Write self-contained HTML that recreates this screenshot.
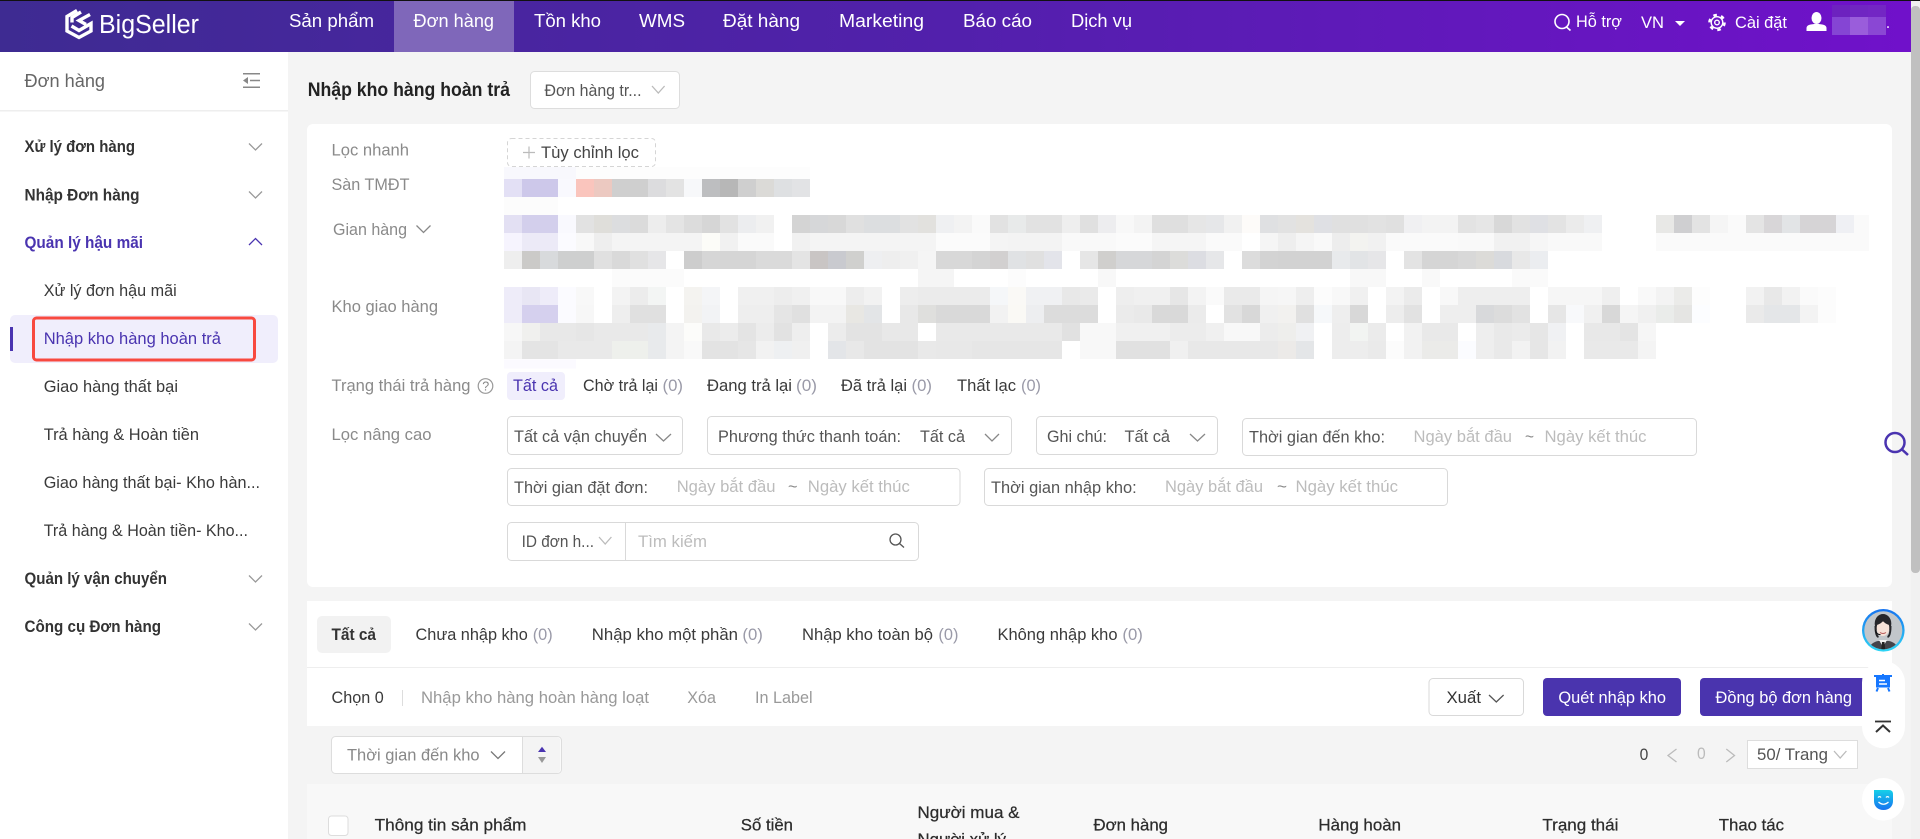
<!DOCTYPE html>
<html lang="vi">
<head>
<meta charset="utf-8">
<title>BigSeller - Nhập kho hàng hoàn trả</title>
<style>
html,body{margin:0;padding:0;width:1920px;height:839px;overflow:hidden;background:#f4f4f4}
svg{display:block;position:absolute;left:0;top:0}
text{font-family:"Liberation Sans",Arial,sans-serif;white-space:pre}
.n text{font-size:18.8px;fill:#fff}
.t text{font-size:17px;fill:#fff}
.g text{font-size:17px;fill:#8a8a8a}
.b text{font-size:17px;fill:#3a3a3a}
.h text{font-size:17px;fill:#333;font-weight:bold}
.p text{font-size:17px;fill:#bcbcbc}
.c text{font-size:17px;fill:#9a9aa8}
.d text{font-size:17px;fill:#555}
.m path{stroke-width:18;fill:none}
.th text{font-size:17px;fill:#2c2c2c;stroke:#2c2c2c;stroke-width:.25}
.ch{fill:none;stroke:#777;stroke-width:1.3}
.cl{fill:none;stroke:#bbb;stroke-width:1.3}
</style>
</head>
<body>
<svg width="1920" height="839" viewBox="0 0 1920 839" xmlns="http://www.w3.org/2000/svg">
<defs>
<linearGradient id="tb" x1="0" y1="0" x2="1" y2="0"><stop offset="0" stop-color="#3e2b92"/><stop offset=".5" stop-color="#5220ac"/><stop offset="1" stop-color="#7011ca"/></linearGradient>
<linearGradient id="ring" x1="0" y1="0" x2="0" y2="1"><stop offset="0" stop-color="#1673f0"/><stop offset="1" stop-color="#2fd6f5"/></linearGradient>
<linearGradient id="mask" x1="0" y1="0" x2="0" y2="1"><stop offset="0" stop-color="#16d0e8"/><stop offset="1" stop-color="#1672f0"/></linearGradient>
<clipPath id="av"><circle cx="1883.3" cy="630.3" r="19"/></clipPath>
</defs>

<!-- page background -->
<rect width="1920" height="839" fill="#f4f4f4"/>

<!-- topbar -->
<rect x="0" y="0" width="1911" height="52" fill="url(#tb)"/>
<rect x="0" y="0" width="1920" height="1" fill="#111"/>
<rect x="394" y="1" width="120" height="51" fill="#7f67ba"/>
<!-- logo -->
<g fill="none" stroke="#fff" stroke-width="3.4" stroke-linejoin="miter">
<path d="M77 10.500L67 16.500V31L79 37.500L91 31V23.500L79 30.500L71.500 26"/>
<path d="M90 14.500L79 20.500L86 24.500"/>
<path d="M72 22.500V17.500L81 12"/>
</g>
<text x="99" y="33" font-size="25.5" fill="#fff" textLength="100" lengthAdjust="spacingAndGlyphs">BigSeller</text>
<g class="n">
<text x="289" y="27" textLength="85" lengthAdjust="spacingAndGlyphs">Sản phẩm</text>
<text x="413.500" y="27" textLength="80.500" lengthAdjust="spacingAndGlyphs">Đơn hàng</text>
<text x="534" y="27" textLength="67" lengthAdjust="spacingAndGlyphs">Tồn kho</text>
<text x="639" y="27" textLength="46" lengthAdjust="spacingAndGlyphs">WMS</text>
<text x="723" y="27" textLength="77" lengthAdjust="spacingAndGlyphs">Đặt hàng</text>
<text x="839" y="27" textLength="85" lengthAdjust="spacingAndGlyphs">Marketing</text>
<text x="963" y="27" textLength="69" lengthAdjust="spacingAndGlyphs">Báo cáo</text>
<text x="1071" y="27" textLength="61" lengthAdjust="spacingAndGlyphs">Dịch vụ</text>
</g>
<!-- topbar right -->
<g fill="none" stroke="#fff" stroke-width="1.600">
<circle cx="1562" cy="21.500" r="7"/>
<path d="M1566.500 27L1570.500 30.500"/>
<circle cx="1717" cy="22.500" r="5.800" stroke-width="1.400"/>
<circle cx="1717" cy="22.500" r="7.600" stroke-width="2.400" stroke-dasharray="3.6 4.36"/>
<circle cx="1717" cy="22.500" r="2.300" stroke-width="1.400"/>
</g>
<g class="t">
<text x="1576" y="27" textLength="46" lengthAdjust="spacingAndGlyphs">Hỗ trợ</text>
<text x="1641" y="28" textLength="23" lengthAdjust="spacingAndGlyphs">VN</text>
<text x="1735" y="28" textLength="52" lengthAdjust="spacingAndGlyphs">Cài đặt</text>
<text x="1886" y="28" textLength="4" lengthAdjust="spacingAndGlyphs">.</text>
</g>
<path d="M1675 21h10l-5 5z" fill="#fff"/>
<ellipse cx="1816.500" cy="18" rx="5" ry="6" fill="#fff"/>
<path d="M1806.500 31v-3c0-3 4-4 10-4s10 1 10 4v3z" fill="#fff"/>
<rect x="1832" y="5" width="18" height="12" fill="#6d22bf"/><rect x="1850" y="5" width="18" height="12" fill="#7026c2"/><rect x="1868" y="5" width="18" height="12" fill="#7326c4"/>
<rect x="1832" y="17" width="18" height="18" fill="#8545d4"/><rect x="1850" y="17" width="18" height="18" fill="#9a5ddb"/><rect x="1868" y="17" width="18" height="18" fill="#8a47d4"/>

<!-- sidebar -->
<rect x="0" y="52" width="288" height="787" fill="#fff"/>
<rect x="0" y="110" width="288" height="1.500" fill="#eee"/>
<text x="24.500" y="87" font-size="18.5" fill="#666" textLength="80.500" lengthAdjust="spacingAndGlyphs">Đơn hàng</text>
<g stroke="#888" stroke-width="1.500" fill="none"><path d="M243 73.800h17M243 87.300h17M250 80.500h10"/></g>
<path d="M248 77v7l-5-3.500z" fill="#888"/>
<rect x="10" y="315" width="268" height="48" rx="5" fill="#f0eefc"/>
<rect x="10" y="327" width="3" height="24" fill="#4a34b0"/>
<rect x="33.500" y="318" width="221" height="42" rx="3" fill="none" stroke="#f8493f" stroke-width="3"/>
<g class="h">
<text x="24.500" y="152" textLength="110.500" lengthAdjust="spacingAndGlyphs">Xử lý đơn hàng</text>
<text x="24.500" y="200.500" textLength="115" lengthAdjust="spacingAndGlyphs">Nhập Đơn hàng</text>
<text x="24.500" y="248" textLength="118.500" lengthAdjust="spacingAndGlyphs" style="fill:#4a34b0">Quản lý hậu mãi</text>
<text x="24.500" y="584" textLength="142.500" lengthAdjust="spacingAndGlyphs">Quản lý vận chuyển</text>
<text x="24.500" y="632" textLength="136.500" lengthAdjust="spacingAndGlyphs">Công cụ Đơn hàng</text>
</g>
<g class="ch" style="stroke:#999">
<path d="M249 143.500l6.500 6.500l6.500-6.500"/><path d="M249 191.500l6.500 6.500l6.500-6.500"/>
<path d="M249 575.500l6.500 6.500l6.500-6.500"/><path d="M249 623.500l6.500 6.500l6.500-6.500"/>
</g>
<path class="ch" style="stroke:#4a34b0" d="M249 245l6.500-6.500l6.500 6.500"/>
<g class="b">
<text x="43.700" y="296" textLength="133" lengthAdjust="spacingAndGlyphs">Xử lý đơn hậu mãi</text>
<text x="43.700" y="344" textLength="177.300" lengthAdjust="spacingAndGlyphs" style="fill:#4a34b0">Nhập kho hàng hoàn trả</text>
<text x="43.700" y="392" textLength="134.300" lengthAdjust="spacingAndGlyphs">Giao hàng thất bại</text>
<text x="43.700" y="440" textLength="155.300" lengthAdjust="spacingAndGlyphs">Trả hàng &amp; Hoàn tiền</text>
<text x="43.700" y="488" textLength="216.300" lengthAdjust="spacingAndGlyphs">Giao hàng thất bại- Kho hàn...</text>
<text x="43.700" y="536" textLength="204.300" lengthAdjust="spacingAndGlyphs">Trả hàng &amp; Hoàn tiền- Kho...</text>
</g>

<!-- page title -->
<text x="307.700" y="96" font-size="19" font-weight="bold" fill="#222" textLength="202.300" lengthAdjust="spacingAndGlyphs">Nhập kho hàng hoàn trả</text>
<rect x="530.500" y="71.500" width="149" height="37" rx="4" fill="#fff" stroke="#ddd"/>
<text x="544.500" y="96" font-size="16.500" fill="#555" textLength="97" lengthAdjust="spacingAndGlyphs">Đơn hàng tr...</text>
<path class="cl" d="M652 86l6.300 7l6.300-7"/>

<!-- cards -->
<rect x="307" y="124" width="1585" height="463" rx="6" fill="#fff"/>
<rect x="307" y="601" width="1585" height="125" fill="#fff"/>
<rect x="307" y="667" width="1585" height="1" fill="#eee"/>
<rect x="307" y="784" width="1585" height="55" fill="#f8f8f8"/>

<!-- mosaic -->
<g class="m">
<g transform="translate(0,173)" style="stroke-width:12"><path stroke="#f8f8fd" d="M504 0h72" style="stroke-width:12"/><path stroke="#fdfdfd" d="M576 0h234" style="stroke-width:12"/></g>
<g transform="translate(0,188)">
<path stroke="#e3e0f5" d="M504 0h18"/><path stroke="#cdc8ea" d="M522 0h36"/><path stroke="#f9f9fe" d="M558 0h18"/><path stroke="#fac5bd" d="M576 0h18"/><path stroke="#ecc9c1" d="M594 0h18"/><path stroke="#cfcfcf" d="M612 0h36"/><path stroke="#dcdcde" d="M648 0h18"/><path stroke="#e3e3e3" d="M666 0h18"/><path stroke="#f7f8fa" d="M684 0h18"/><path stroke="#bdbec0" d="M702 0h18"/><path stroke="#b7b7b7" d="M720 0h18"/><path stroke="#cfcfcf" d="M738 0h18"/><path stroke="#dbdad7" d="M756 0h18"/><path stroke="#dee0e2" d="M774 0h18"/><path stroke="#e2e3e5" d="M792 0h18"/>
</g>
<g transform="translate(0,206)"><path stroke="#fcfcfc" d="M504 0h54"/></g>
<g transform="translate(0,224)">
<path stroke="#e3e0f3" d="M504 0h18"/><path stroke="#d3cfec" d="M522 0h36"/><path stroke="#f9f9fe" d="M558 0h18"/><path stroke="#e2e2e2" d="M576 0h18"/><path stroke="#dfdeda" d="M594 0h18"/><path stroke="#dcdddf" d="M612 0h18"/><path stroke="#dbdbdb" d="M630 0h18"/><path stroke="#ededed" d="M648 0h18"/><path stroke="#e4e4e4" d="M666 0h18"/><path stroke="#dcdcdc" d="M684 0h18"/><path stroke="#d6d6d6" d="M702 0h18"/><path stroke="#e2e2e2" d="M720 0h18"/><path stroke="#ecedef" d="M738 0h18"/><path stroke="#f1f1f1" d="M756 0h18"/><path stroke="#d4d4d4" d="M792 0h18"/><path stroke="#d6d7d9" d="M810 0h18"/><path stroke="#d8d8d8" d="M828 0h18"/><path stroke="#e0e0e0" d="M846 0h18"/><path stroke="#dcdee0" d="M864 0h36"/><path stroke="#e2e2e2" d="M900 0h18"/><path stroke="#e2e1de" d="M918 0h18"/><path stroke="#eff0f2" d="M936 0h18"/><path stroke="#f3f3f3" d="M954 0h18"/><path stroke="#fafafa" d="M972 0h18"/><path stroke="#e2e2e2" d="M990 0h18"/><path stroke="#e8eaea" d="M1008 0h18"/><path stroke="#e2e2e2" d="M1026 0h36"/><path stroke="#eeeeee" d="M1062 0h18"/><path stroke="#e0e0e0" d="M1080 0h18"/><path stroke="#ededef" d="M1098 0h18"/><path stroke="#f8f8f8" d="M1116 0h18"/><path stroke="#f3f3f3" d="M1134 0h18"/><path stroke="#dfdfdf" d="M1152 0h36"/><path stroke="#e6e6e6" d="M1188 0h18"/><path stroke="#e6e7e9" d="M1206 0h18"/><path stroke="#f1f1f1" d="M1224 0h18"/><path stroke="#fdfbf9" d="M1242 0h18"/><path stroke="#dfe0e2" d="M1260 0h18"/><path stroke="#e2e2e2" d="M1278 0h18"/><path stroke="#e4e2de" d="M1296 0h18"/><path stroke="#dfe0e4" d="M1314 0h18"/><path stroke="#e0e0e0" d="M1332 0h36"/><path stroke="#e2e2e2" d="M1368 0h18"/><path stroke="#e0e0e0" d="M1386 0h18"/><path stroke="#f0f0f2" d="M1404 0h18"/><path stroke="#f3f3f3" d="M1422 0h36"/><path stroke="#e3e3e3" d="M1458 0h18"/><path stroke="#e6e6e6" d="M1476 0h18"/><path stroke="#d8d8d8" d="M1494 0h18"/><path stroke="#e2e2e2" d="M1512 0h18"/><path stroke="#dfe0e4" d="M1530 0h18"/><path stroke="#e3e3e3" d="M1548 0h18"/><path stroke="#ebebeb" d="M1566 0h18"/><path stroke="#eff0f2" d="M1584 0h18"/><path stroke="#e8e8e6" d="M1656 0h18"/><path stroke="#cfcfd1" d="M1674 0h18"/><path stroke="#e3e3e3" d="M1692 0h18"/><path stroke="#f5f5f5" d="M1710 0h18"/><path stroke="#fafafa" d="M1728 0h18"/><path stroke="#e4e4e4" d="M1746 0h18"/><path stroke="#d8d6d8" d="M1764 0h18"/><path stroke="#e2e4e6" d="M1782 0h18"/><path stroke="#d6d4d6" d="M1800 0h36"/><path stroke="#eff0f4" d="M1836 0h18"/><path stroke="#fafafa" d="M1854 0h15"/>
</g>
<g transform="translate(0,242)">
<path stroke="#f6f4fe" d="M504 0h18"/><path stroke="#eceaf7" d="M522 0h36"/><path stroke="#fbfbff" d="M558 0h18"/><path stroke="#f8f8f8" d="M576 0h18"/><path stroke="#eeeeee" d="M594 0h18"/><path stroke="#f4f4f4" d="M612 0h90"/><path stroke="#fcfcf8" d="M702 0h18"/><path stroke="#f1f1f1" d="M720 0h18"/><path stroke="#fafafa" d="M738 0h36"/><path stroke="#f1f1f1" d="M792 0h18"/><path stroke="#f4f4f4" d="M810 0h126"/><path stroke="#fbfbfb" d="M936 0h54"/><path stroke="#f4f4f4" d="M990 0h18"/><path stroke="#f3f3f3" d="M1008 0h54"/><path stroke="#f9f9f9" d="M1062 0h54"/><path stroke="#fbfbfb" d="M1116 0h36"/><path stroke="#f5f5f5" d="M1152 0h54"/><path stroke="#fafafa" d="M1206 0h36"/><path stroke="#f5f5f5" d="M1260 0h18"/><path stroke="#eeeeee" d="M1278 0h18"/><path stroke="#f5f5f5" d="M1296 0h18"/><path stroke="#f9f9f9" d="M1314 0h18"/><path stroke="#ededed" d="M1332 0h18"/><path stroke="#f3f3f0" d="M1350 0h18"/><path stroke="#f1f1f1" d="M1368 0h18"/><path stroke="#fafafa" d="M1386 0h72"/><path stroke="#f9f9f9" d="M1458 0h36"/><path stroke="#f1f1f1" d="M1494 0h36"/><path stroke="#f6f6f6" d="M1530 0h18"/><path stroke="#f9f9f9" d="M1548 0h54"/><path stroke="#fafafa" d="M1656 0h213"/>
</g>
<g transform="translate(0,260)">
<path stroke="#eeeeee" d="M504 0h18"/><path stroke="#cbcac8" d="M522 0h18"/><path stroke="#d8dadc" d="M540 0h18"/><path stroke="#cecfcf" d="M558 0h36"/><path stroke="#e0e0e0" d="M594 0h18"/><path stroke="#d9d9d9" d="M612 0h18"/><path stroke="#e0e0e0" d="M630 0h18"/><path stroke="#e6e6e8" d="M648 0h18"/><path stroke="#cdcdcd" d="M684 0h18"/><path stroke="#d6d6d6" d="M702 0h18"/><path stroke="#d5d5d5" d="M720 0h36"/><path stroke="#dadada" d="M756 0h36"/><path stroke="#e4e4e4" d="M792 0h18"/><path stroke="#c9c5c4" d="M810 0h18"/><path stroke="#c9cacf" d="M828 0h18"/><path stroke="#d0d0ce" d="M846 0h18"/><path stroke="#eeeff1" d="M864 0h18"/><path stroke="#eeeeee" d="M882 0h18"/><path stroke="#f0f0f0" d="M900 0h18"/><path stroke="#f5f5f5" d="M918 0h18"/><path stroke="#d8d8d8" d="M936 0h36"/><path stroke="#d4d4d4" d="M972 0h18"/><path stroke="#d2d0d0" d="M990 0h18"/><path stroke="#e0e2e4" d="M1008 0h18"/><path stroke="#e0e0e0" d="M1026 0h18"/><path stroke="#e3e4ea" d="M1044 0h18"/><path stroke="#e6e6e6" d="M1080 0h18"/><path stroke="#d0cfcd" d="M1098 0h18"/><path stroke="#d6d7d9" d="M1116 0h36"/><path stroke="#d4d4d4" d="M1152 0h18"/><path stroke="#dcdcda" d="M1170 0h18"/><path stroke="#dcdde2" d="M1188 0h18"/><path stroke="#e6e7e9" d="M1206 0h18"/><path stroke="#dcdcdc" d="M1242 0h18"/><path stroke="#d3d3d3" d="M1260 0h18"/><path stroke="#d2d2d2" d="M1278 0h54"/><path stroke="#e8eaec" d="M1332 0h18"/><path stroke="#e2e4e6" d="M1350 0h18"/><path stroke="#e6e6e8" d="M1368 0h18"/><path stroke="#e3e3e3" d="M1404 0h18"/><path stroke="#d5d5d5" d="M1422 0h36"/><path stroke="#d8d8d8" d="M1458 0h18"/><path stroke="#dcdbd8" d="M1476 0h18"/><path stroke="#d8dade" d="M1494 0h18"/><path stroke="#e8e8e8" d="M1512 0h18"/><path stroke="#ebedf0" d="M1530 0h18"/>
</g>
<g transform="translate(0,278)">
<path stroke="#fbfbfb" d="M612 0h72"/><path stroke="#f5f5f5" d="M918 0h36"/><path stroke="#fcfcfc" d="M1008 0h18"/><path stroke="#f8f8f8" d="M1098 0h18"/><path stroke="#f8f8f8" d="M1350 0h36"/><path stroke="#f9f9f9" d="M1422 0h18"/><path stroke="#fafafa" d="M1512 0h36"/>
</g>
<g transform="translate(0,296)">
<path stroke="#eeecf9" d="M504 0h18"/><path stroke="#e8e6f4" d="M522 0h18"/><path stroke="#eeecf9" d="M540 0h18"/><path stroke="#fbfbff" d="M558 0h18"/><path stroke="#f8f8f8" d="M576 0h18"/><path stroke="#f3f3f3" d="M612 0h18"/><path stroke="#ececec" d="M630 0h18"/><path stroke="#f3f5f4" d="M648 0h18"/><path stroke="#f4f3f0" d="M684 0h18"/><path stroke="#f4f5f7" d="M702 0h18"/><path stroke="#f0f0f0" d="M738 0h36"/><path stroke="#ededed" d="M774 0h18"/><path stroke="#f0f0f0" d="M792 0h18"/><path stroke="#f8f8f8" d="M810 0h36"/><path stroke="#ededed" d="M846 0h18"/><path stroke="#f2f2f2" d="M864 0h18"/><path stroke="#ededed" d="M900 0h18"/><path stroke="#ebebeb" d="M918 0h72"/><path stroke="#f5f7f9" d="M990 0h18"/><path stroke="#faf9f6" d="M1008 0h18"/><path stroke="#f0f1f3" d="M1026 0h36"/><path stroke="#e8e8e8" d="M1062 0h18"/><path stroke="#eaeaea" d="M1080 0h18"/><path stroke="#eeeeee" d="M1116 0h18"/><path stroke="#f0f0f0" d="M1134 0h36"/><path stroke="#e6e6e6" d="M1170 0h18"/><path stroke="#f3f3f3" d="M1188 0h18"/><path stroke="#fafafa" d="M1206 0h18"/><path stroke="#eaeaea" d="M1224 0h36"/><path stroke="#f5f5f5" d="M1260 0h18"/><path stroke="#f6f6f6" d="M1278 0h18"/><path stroke="#eeeeee" d="M1296 0h18"/><path stroke="#fcfcfc" d="M1314 0h18"/><path stroke="#f8f8f8" d="M1332 0h18"/><path stroke="#f0f0f0" d="M1350 0h18"/><path stroke="#f3f3f3" d="M1386 0h18"/><path stroke="#ebebeb" d="M1404 0h18"/><path stroke="#f8f8f8" d="M1440 0h18"/><path stroke="#eeeeee" d="M1458 0h72"/><path stroke="#f6f6f6" d="M1548 0h54"/><path stroke="#efefef" d="M1602 0h18"/><path stroke="#f9f9f9" d="M1638 0h18"/><path stroke="#f3f3f3" d="M1656 0h18"/><path stroke="#ebebe9" d="M1674 0h18"/><path stroke="#fdfdfd" d="M1692 0h18"/><path stroke="#f2f2f2" d="M1746 0h18"/><path stroke="#e8e8e8" d="M1764 0h18"/><path stroke="#f2f2f2" d="M1782 0h18"/><path stroke="#fafafa" d="M1800 0h18"/><path stroke="#fcfcfc" d="M1818 0h18"/>
</g>
<g transform="translate(0,314)">
<path stroke="#eeecf9" d="M504 0h18"/><path stroke="#d5d0ee" d="M522 0h36"/><path stroke="#fbfbff" d="M558 0h18"/><path stroke="#f7f7f7" d="M576 0h18"/><path stroke="#eeeeee" d="M612 0h18"/><path stroke="#e0e0e0" d="M630 0h36"/><path stroke="#f3f2ef" d="M684 0h18"/><path stroke="#f2f3f5" d="M702 0h18"/><path stroke="#eeeeee" d="M738 0h36"/><path stroke="#e5e5e5" d="M774 0h18"/><path stroke="#e0e0e0" d="M792 0h18"/><path stroke="#f3f3f3" d="M810 0h36"/><path stroke="#e8e7e3" d="M846 0h18"/><path stroke="#e3e5e7" d="M864 0h18"/><path stroke="#e8e8e8" d="M900 0h18"/><path stroke="#dfdfdd" d="M918 0h18"/><path stroke="#d9d9d9" d="M936 0h54"/><path stroke="#f2f2f2" d="M990 0h18"/><path stroke="#faf9f5" d="M1008 0h18"/><path stroke="#edeef0" d="M1026 0h18"/><path stroke="#dcdcdc" d="M1044 0h54"/><path stroke="#ebebeb" d="M1116 0h18"/><path stroke="#e9e9e9" d="M1134 0h18"/><path stroke="#d9d9d9" d="M1152 0h36"/><path stroke="#ebebeb" d="M1188 0h18"/><path stroke="#e2e2e2" d="M1224 0h18"/><path stroke="#d8d8d8" d="M1242 0h18"/><path stroke="#f0f0f0" d="M1260 0h18"/><path stroke="#f2f1ef" d="M1278 0h18"/><path stroke="#e0e0e0" d="M1296 0h18"/><path stroke="#f6f8fa" d="M1314 0h18"/><path stroke="#eeeeee" d="M1332 0h18"/><path stroke="#d8d8d8" d="M1350 0h18"/><path stroke="#ededed" d="M1386 0h18"/><path stroke="#e2e2e2" d="M1404 0h18"/><path stroke="#eeeeee" d="M1440 0h36"/><path stroke="#d8d9db" d="M1476 0h18"/><path stroke="#dcdcdc" d="M1494 0h18"/><path stroke="#e2e2e2" d="M1512 0h18"/><path stroke="#e6e6e6" d="M1548 0h18"/><path stroke="#f8f9fb" d="M1566 0h18"/><path stroke="#f0f0f0" d="M1584 0h18"/><path stroke="#d8d8d8" d="M1602 0h18"/><path stroke="#f5f5f5" d="M1620 0h18"/><path stroke="#f0f0f0" d="M1638 0h18"/><path stroke="#eaecea" d="M1656 0h18"/><path stroke="#e5e5e3" d="M1674 0h18"/><path stroke="#fcfdff" d="M1692 0h18"/><path stroke="#eaeaea" d="M1746 0h18"/><path stroke="#e4e6e8" d="M1764 0h36"/><path stroke="#f3f3f3" d="M1800 0h18"/><path stroke="#fcfcfc" d="M1818 0h18"/>
</g>
<g transform="translate(0,332)">
<path stroke="#f7f7f7" d="M504 0h18"/><path stroke="#f0f0ee" d="M522 0h18"/><path stroke="#e8e8e8" d="M540 0h36"/><path stroke="#e6e6e6" d="M576 0h18"/><path stroke="#e9e9e9" d="M594 0h54"/><path stroke="#e8eaec" d="M648 0h18"/><path stroke="#f4f4f4" d="M666 0h18"/><path stroke="#fcfcfa" d="M684 0h18"/><path stroke="#e9e9e9" d="M702 0h18"/><path stroke="#ececec" d="M720 0h18"/><path stroke="#e4e4e4" d="M738 0h18"/><path stroke="#ececec" d="M756 0h18"/><path stroke="#e2e2e2" d="M774 0h18"/><path stroke="#eeeeee" d="M792 0h18"/><path stroke="#ececec" d="M828 0h18"/><path stroke="#e3e3e3" d="M846 0h36"/><path stroke="#e8e8e8" d="M882 0h36"/><path stroke="#e9e9e9" d="M936 0h126"/><path stroke="#e1e1e1" d="M1062 0h18"/><path stroke="#f8f8f8" d="M1080 0h36"/><path stroke="#f0f0f0" d="M1116 0h54"/><path stroke="#ececec" d="M1170 0h36"/><path stroke="#f0f0f0" d="M1206 0h18"/><path stroke="#f8f8f8" d="M1224 0h36"/><path stroke="#ececec" d="M1260 0h18"/><path stroke="#eeeeec" d="M1278 0h18"/><path stroke="#f0f1f3" d="M1296 0h18"/><path stroke="#ededed" d="M1332 0h18"/><path stroke="#f2f4f2" d="M1350 0h18"/><path stroke="#ebebeb" d="M1368 0h18"/><path stroke="#f2f2f2" d="M1404 0h18"/><path stroke="#e9e9e9" d="M1422 0h36"/><path stroke="#eeeeee" d="M1476 0h18"/><path stroke="#e9e9e9" d="M1494 0h18"/><path stroke="#ebebeb" d="M1512 0h18"/><path stroke="#e6e6e6" d="M1530 0h18"/><path stroke="#f0f1f3" d="M1548 0h18"/><path stroke="#e8e8e8" d="M1584 0h36"/><path stroke="#e4e4e4" d="M1620 0h18"/><path stroke="#f6f6f6" d="M1638 0h18"/>
</g>
<g transform="translate(0,350)">
<path stroke="#f4f4f4" d="M504 0h18"/><path stroke="#e4e4e4" d="M522 0h36"/><path stroke="#e9e9e9" d="M558 0h54"/><path stroke="#eef0ec" d="M612 0h36"/><path stroke="#e8eaec" d="M648 0h18"/><path stroke="#f4f4f4" d="M666 0h18"/><path stroke="#f9f9f9" d="M684 0h18"/><path stroke="#e3e3e3" d="M702 0h36"/><path stroke="#e6e6e6" d="M738 0h18"/><path stroke="#f2f2f2" d="M756 0h18"/><path stroke="#eef0f2" d="M774 0h18"/><path stroke="#f0f0f0" d="M792 0h18"/><path stroke="#e3e5e8" d="M828 0h18"/><path stroke="#e8e8e8" d="M846 0h18"/><path stroke="#e3e3e3" d="M864 0h54"/><path stroke="#e9e9e9" d="M918 0h18"/><path stroke="#e8e8e8" d="M936 0h36"/><path stroke="#e6e6e6" d="M972 0h90"/><path stroke="#f8f8f8" d="M1080 0h36"/><path stroke="#e1e1e1" d="M1116 0h54"/><path stroke="#f0f0f0" d="M1170 0h18"/><path stroke="#e8e8e8" d="M1188 0h90"/><path stroke="#eceae8" d="M1278 0h18"/><path stroke="#e4e6e8" d="M1296 0h18"/><path stroke="#ededed" d="M1332 0h36"/><path stroke="#eaeaea" d="M1368 0h18"/><path stroke="#fcfcfc" d="M1386 0h18"/><path stroke="#f2f2f2" d="M1404 0h18"/><path stroke="#ebebe9" d="M1422 0h36"/><path stroke="#fbfcff" d="M1458 0h18"/><path stroke="#eeeeee" d="M1476 0h18"/><path stroke="#e9e9e9" d="M1494 0h18"/><path stroke="#f2f2f2" d="M1512 0h18"/><path stroke="#e6e6e6" d="M1530 0h18"/><path stroke="#f2f2f2" d="M1548 0h18"/><path stroke="#e9e9e9" d="M1584 0h54"/><path stroke="#f4f4f4" d="M1638 0h18"/>
</g>
<g transform="translate(0,364)"><path stroke="#fbfaff" d="M504 0h72" style="stroke-width:9"/></g>
</g>

<!-- filter labels -->
<g class="g">
<text x="331.500" y="155.500" textLength="77.500" lengthAdjust="spacingAndGlyphs">Lọc nhanh</text>
<text x="331.500" y="190" textLength="78" lengthAdjust="spacingAndGlyphs">Sàn TMĐT</text>
<text x="333" y="235" textLength="74" lengthAdjust="spacingAndGlyphs">Gian hàng</text>
<text x="331.500" y="312" textLength="106.500" lengthAdjust="spacingAndGlyphs">Kho giao hàng</text>
<text x="331.500" y="391" textLength="139" lengthAdjust="spacingAndGlyphs">Trạng thái trả hàng</text>
<text x="331.500" y="440" textLength="100" lengthAdjust="spacingAndGlyphs">Lọc nâng cao</text>
</g>
<path class="ch" style="stroke:#888" d="M416.500 225.500l7 7l7-7"/>
<circle cx="485.500" cy="386" r="7.300" fill="none" stroke="#999" stroke-width="1.200"/>
<text x="482.200" y="390.500" font-size="12.500" fill="#888">?</text>

<rect x="507.500" y="138.500" width="148" height="28" rx="4" fill="#fff" stroke="#d5d5d5" stroke-dasharray="4 3"/>
<path d="M529 146.500v12M523 152.500h12" stroke="#bbb" stroke-width="1.200"/>
<text x="541" y="158" font-size="17" fill="#444" textLength="98" lengthAdjust="spacingAndGlyphs">Tùy chỉnh lọc</text>

<!-- status -->
<rect x="507" y="372" width="58" height="28" rx="4" fill="#f0eefc"/>
<text x="513" y="391" font-size="17" fill="#4a34b0" textLength="45" lengthAdjust="spacingAndGlyphs">Tất cả</text>
<g class="b">
<text x="583" y="391" textLength="75" lengthAdjust="spacingAndGlyphs">Chờ trả lại</text>
<text x="707" y="391" textLength="85" lengthAdjust="spacingAndGlyphs">Đang trả lại</text>
<text x="841" y="391" textLength="66" lengthAdjust="spacingAndGlyphs">Đã trả lại</text>
<text x="957" y="391" textLength="59" lengthAdjust="spacingAndGlyphs">Thất lạc</text>
</g>
<g class="c">
<text x="662.500" y="391" textLength="20.500" lengthAdjust="spacingAndGlyphs">(0)</text>
<text x="796" y="391" textLength="21" lengthAdjust="spacingAndGlyphs">(0)</text>
<text x="911.500" y="391" textLength="20.500" lengthAdjust="spacingAndGlyphs">(0)</text>
<text x="1021" y="391" textLength="20" lengthAdjust="spacingAndGlyphs">(0)</text>
</g>

<!-- filter row 1 -->
<g fill="#fff" stroke="#d9d9d9">
<rect x="507.500" y="416.500" width="175" height="38" rx="4"/>
<rect x="707.500" y="416.500" width="304" height="38" rx="4"/>
<rect x="1036.500" y="416.500" width="181" height="38" rx="4"/>
<rect x="1242.500" y="418.500" width="454" height="37" rx="4"/>
<rect x="507.500" y="468.500" width="452.500" height="37" rx="4"/>
<rect x="984.500" y="468.500" width="463" height="37" rx="4"/>
<rect x="507.500" y="522.500" width="411" height="38" rx="4"/>
</g>
<path d="M625.500 522v38" stroke="#d9d9d9"/>
<g class="d">
<text x="514" y="442" textLength="133" lengthAdjust="spacingAndGlyphs">Tất cả vận chuyển</text>
<text x="718" y="442" textLength="183" lengthAdjust="spacingAndGlyphs">Phương thức thanh toán:</text>
<text x="920" y="442" textLength="45" lengthAdjust="spacingAndGlyphs">Tất cả</text>
<text x="1047" y="442" textLength="60" lengthAdjust="spacingAndGlyphs">Ghi chú:</text>
<text x="1124.500" y="442" textLength="45.500" lengthAdjust="spacingAndGlyphs">Tất cả</text>
<text x="1249" y="442.700" textLength="136" lengthAdjust="spacingAndGlyphs">Thời gian đến kho:</text>
<text x="514" y="493" textLength="134" lengthAdjust="spacingAndGlyphs">Thời gian đặt đơn:</text>
<text x="991" y="493" textLength="145.700" lengthAdjust="spacingAndGlyphs">Thời gian nhập kho:</text>
<text x="521.600" y="547" textLength="72.400" lengthAdjust="spacingAndGlyphs">ID đơn h...</text>
</g>
<g class="ch" style="stroke:#888">
<path d="M656 434l7.500 7l7.500-7"/><path d="M985 434l7 7l7-7"/><path d="M1190 434l7.500 7l7.500-7"/>
</g>
<path class="cl" d="M599 537l6.200 7l6.200-7"/>
<g class="p">
<text x="1413.500" y="442" textLength="98.500" lengthAdjust="spacingAndGlyphs">Ngày bắt đầu</text>
<text x="1525" y="442" textLength="9" lengthAdjust="spacingAndGlyphs" style="fill:#888">~</text>
<text x="1544.500" y="442" textLength="102" lengthAdjust="spacingAndGlyphs">Ngày kết thúc</text>
<text x="676.700" y="492" textLength="98.800" lengthAdjust="spacingAndGlyphs">Ngày bắt đầu</text>
<text x="788" y="492" textLength="9.500" lengthAdjust="spacingAndGlyphs" style="fill:#888">~</text>
<text x="807.800" y="492" textLength="102" lengthAdjust="spacingAndGlyphs">Ngày kết thúc</text>
<text x="1165" y="492" textLength="98" lengthAdjust="spacingAndGlyphs">Ngày bắt đầu</text>
<text x="1277" y="492" textLength="10" lengthAdjust="spacingAndGlyphs" style="fill:#888">~</text>
<text x="1295.500" y="492" textLength="102.500" lengthAdjust="spacingAndGlyphs">Ngày kết thúc</text>
<text x="638" y="547" textLength="69" lengthAdjust="spacingAndGlyphs">Tìm kiếm</text>
</g>
<g fill="none" stroke="#555" stroke-width="1.300"><circle cx="895.500" cy="539.500" r="5.500"/><path d="M899.500 543.500l4.500 4"/></g>

<!-- tabs -->
<rect x="317" y="616" width="74" height="37" rx="5" fill="#f2f2f2"/>
<text x="331.500" y="640" font-size="17" font-weight="bold" fill="#333" textLength="44.500" lengthAdjust="spacingAndGlyphs">Tất cả</text>
<g class="b">
<text x="415.500" y="640" textLength="112.300" lengthAdjust="spacingAndGlyphs">Chưa nhập kho</text>
<text x="591.800" y="640" textLength="146.200" lengthAdjust="spacingAndGlyphs">Nhập kho một phần</text>
<text x="802" y="640" textLength="131" lengthAdjust="spacingAndGlyphs">Nhập kho toàn bộ</text>
<text x="997.500" y="640" textLength="120" lengthAdjust="spacingAndGlyphs">Không nhập kho</text>
<text x="331.500" y="703" textLength="52.200" lengthAdjust="spacingAndGlyphs">Chọn 0</text>
</g>
<g class="c">
<text x="532.700" y="640" textLength="20" lengthAdjust="spacingAndGlyphs">(0)</text>
<text x="742.400" y="640" textLength="20.500" lengthAdjust="spacingAndGlyphs">(0)</text>
<text x="938.400" y="640" textLength="20" lengthAdjust="spacingAndGlyphs">(0)</text>
<text x="1122.400" y="640" textLength="20.500" lengthAdjust="spacingAndGlyphs">(0)</text>
</g>
<path d="M402.500 690v16" stroke="#ddd"/>
<g class="g">
<text x="421" y="703" textLength="228" lengthAdjust="spacingAndGlyphs" style="fill:#999">Nhập kho hàng hoàn hàng loạt</text>
<text x="687.300" y="703" textLength="28.700" lengthAdjust="spacingAndGlyphs" style="fill:#999">Xóa</text>
<text x="755" y="703" textLength="57.600" lengthAdjust="spacingAndGlyphs" style="fill:#999">In Label</text>
</g>

<!-- action buttons -->
<rect x="1429" y="678.500" width="94.500" height="37" rx="4" fill="#fff" stroke="#d9d9d9"/>
<text x="1446.500" y="703" font-size="17" fill="#333" textLength="34.500" lengthAdjust="spacingAndGlyphs">Xuất</text>
<path class="ch" style="stroke:#555" d="M1489 695l7.300 7l7.300-7"/>
<rect x="1543" y="678" width="138" height="38" rx="4" fill="#4a34ae"/>
<rect x="1700" y="678" width="170" height="38" rx="4" fill="#4a34ae"/>
<g class="t">
<text x="1558.400" y="703" textLength="107.600" lengthAdjust="spacingAndGlyphs">Quét nhập kho</text>
<text x="1715.500" y="703" textLength="136.500" lengthAdjust="spacingAndGlyphs">Đồng bộ đơn hàng</text>
</g>

<!-- sort select -->
<rect x="331.500" y="736.500" width="230" height="37" rx="4" fill="#fff" stroke="#ddd"/>
<path d="M522.500 737h34a4 4 0 0 1 4 4v28a4 4 0 0 1-4 4h-34z" fill="#f4f4f4"/>
<path d="M522.500 737v36" stroke="#ddd"/>
<text x="347" y="760.700" font-size="17" fill="#888" textLength="132.600" lengthAdjust="spacingAndGlyphs">Thời gian đến kho</text>
<path class="ch" d="M491 751.500l7 7l7-7"/>
<path d="M542 746.700l4 5.300h-8z" fill="#4a34b0"/>
<path d="M538 757h8l-4 6z" fill="#999"/>

<!-- pagination -->
<text x="1639.600" y="760" font-size="17" fill="#444" textLength="8.700" lengthAdjust="spacingAndGlyphs">0</text>
<path class="cl" d="M1676.500 749l-8.500 6.500l8.500 6.500"/>
<text x="1697" y="759" font-size="17" fill="#bbb" textLength="8.700" lengthAdjust="spacingAndGlyphs">0</text>
<path class="cl" d="M1726.300 749l8.200 6.500l-8.200 6.500"/>
<rect x="1747.500" y="740.500" width="110" height="28" fill="#fff" stroke="#ddd"/>
<text x="1757" y="760" font-size="17" fill="#555" textLength="71" lengthAdjust="spacingAndGlyphs">50/ Trang</text>
<path class="cl" d="M1834 751l6.200 7l6.200-7"/>

<!-- table header -->
<rect x="328.500" y="816" width="19.500" height="19.500" rx="3" fill="#fff" stroke="#ddd"/>
<g class="th">
<text x="374.700" y="830.700" textLength="151.800" lengthAdjust="spacingAndGlyphs">Thông tin sản phẩm</text>
<text x="740.800" y="830.700" textLength="52.200" lengthAdjust="spacingAndGlyphs">Số tiền</text>
<text x="917.500" y="818" textLength="102" lengthAdjust="spacingAndGlyphs">Người mua &amp;</text>
<text x="917.500" y="845" textLength="88.500" lengthAdjust="spacingAndGlyphs">Người xử lý</text>
<text x="1093.500" y="830.700" textLength="74.500" lengthAdjust="spacingAndGlyphs">Đơn hàng</text>
<text x="1318.400" y="830.700" textLength="82.600" lengthAdjust="spacingAndGlyphs">Hàng hoàn</text>
<text x="1542.400" y="830.700" textLength="76" lengthAdjust="spacingAndGlyphs">Trạng thái</text>
<text x="1718.800" y="830.700" textLength="65.200" lengthAdjust="spacingAndGlyphs">Thao tác</text>
</g>

<!-- scrollbar -->
<rect x="1911" y="1" width="9" height="838" fill="#f1f1f1"/>
<rect x="1911" y="6" width="9" height="567" rx="4" fill="#c0c0c0"/>

<!-- floating search -->
<g fill="none" stroke="#4a34b0" stroke-width="2.500">
<circle cx="1895" cy="442.500" r="9.500"/>
<path d="M1902 449.500l6 5.500"/>
</g>

<!-- avatar -->
<circle cx="1883.300" cy="630.300" r="21.300" fill="url(#ring)"/>
<g clip-path="url(#av)">
<rect x="1862" y="609" width="43" height="43" fill="#c2c6ca"/>
<path d="M1868 652c1-7 5-10 10-11h11c5 1 9 4 10 11z" fill="#44444a"/>
<path d="M1879 640l4 7l4-7z" fill="#f2f2f2"/><path d="M1882 642h2.500l1 10h-4.500z" fill="#222"/>
<ellipse cx="1883" cy="623.500" rx="8.300" ry="9.500" fill="#26262a"/>
<path d="M1875.500 626c0 2 0 10 3 11M1890.500 626c0 2 0 10-3 11" fill="none" stroke="#26262a" stroke-width="2"/>
<ellipse cx="1883" cy="628" rx="6.300" ry="8" fill="#f6e2d8"/>
<path d="M1876.700 625c2-4 4-5.500 6.300-5.500s4.500 1.500 6.300 5.500c-3-.8-5-2.500-6.300-3.800c-1.300 1.300-3.300 3-6.300 3.800z" fill="#26262a"/>
<path d="M1880 632.500q3 2 6 0" fill="none" stroke="#b85a5a" stroke-width="1"/>
<path d="M1875.500 630q1 5 5 4.500" fill="none" stroke="#111" stroke-width="1"/>
</g>

<!-- floating widgets -->
<rect x="1862" y="661" width="43" height="87.300" rx="21.500" fill="#fff"/>
<circle cx="1883.300" cy="799.300" r="21.300" fill="#fff"/>
<path d="M1874 676h18M1883 674v2" stroke="#1677ff" stroke-width="2"/>
<path d="M1876 676h14v11.500h-14z" fill="#1677ff"/>
<path d="M1879 680.500h6M1879 684h8" stroke="#fff" stroke-width="1.400"/>
<path d="M1878 688l-1.500 3.500M1888 688l1.500 3.500" stroke="#1677ff" stroke-width="2"/>
<path d="M1875 721.500h16" stroke="#333" stroke-width="1.800"/>
<path d="M1876 732l7-6.500l7 6.500" fill="none" stroke="#333" stroke-width="2"/>
<path d="M1874 790h15c2.500 0 4 1.500 4 4v7c0 5.500-4 9-9.500 9s-9.500-3.500-9.500-9z" fill="url(#mask)"/>
<path d="M1878 797.500q1.500-1.800 3 0M1886 797.500q1.500-1.800 3 0M1878.500 802q5 4.500 10 0" fill="none" stroke="#fff" stroke-width="1.300"/>
</svg>
</body>
</html>
